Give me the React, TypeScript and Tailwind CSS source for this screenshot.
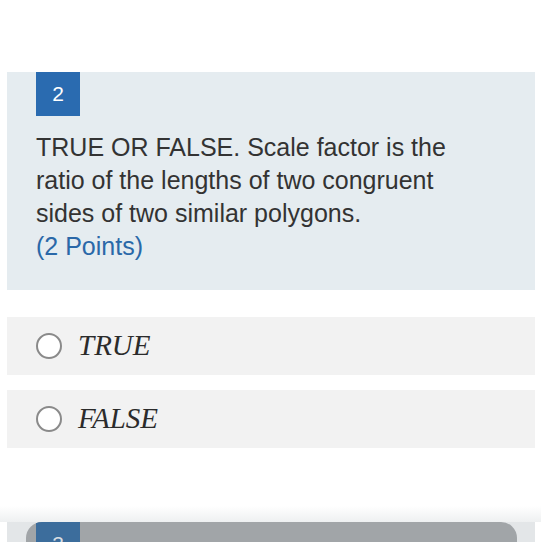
import React from 'react';

const sans = { fontFamily: '"Liberation Sans", Arial, Helvetica, sans-serif' };

function Option({ label }: { label: string }) {
  return (
    <div className="ml-[7px] mr-[6px] h-[58px] bg-[#f2f2f2] flex items-center pl-[29px]">
      <span className="w-[26px] h-[26px] rounded-full border-2 border-[#8a8a8a] bg-white flex-shrink-0" />
      <span className="ml-[16px] text-[29px] italic text-[#2b2b2b] font-['Liberation_Serif','Times_New_Roman',serif]">
        {label}
      </span>
    </div>
  );
}

export default function App() {
  return (
    <div className="w-[541px] h-[542px] bg-white overflow-hidden" style={sans}>
      <div className="h-[72px]" />

      {/* Question card */}
      <div className="ml-[7px] mr-[6px] bg-[#e5ecf0] pl-[29px] pb-[27px]">
        <div className="w-[44px] h-[44px] bg-[#2a6bb0] text-white text-[21px] flex items-center justify-center">
          2
        </div>
        <p className="mt-[15px] max-w-[440px] text-[25px] leading-[33px] text-[#333333]">
          TRUE OR FALSE. Scale factor is the ratio of the lengths of two congruent sides of two similar polygons.
          <br />
          <span className="text-[#2a68a8]">(2 Points)</span>
        </p>
      </div>

      {/* Choices */}
      <div className="mt-[27px] flex flex-col gap-[15px]">
        <Option label="TRUE" />
        <Option label="FALSE" />
      </div>

      {/* Next question, dimmed under an overlay */}
      <div className="mt-[58px] h-[16px] bg-gradient-to-b from-white to-[#eef0f1]" />
      <div className="ml-[7px] mr-[6px] h-[40px] bg-[#e3e6e8] flex">
        <div className="ml-[19px] w-[491px] bg-[#a1a5a8] rounded-t-[16px] overflow-hidden flex">
          <div className="ml-[10px] w-[44px] h-full bg-[#3c6d9c] text-[#d8dde2] text-[21px] flex justify-center pt-[6px]">
            3
          </div>
        </div>
      </div>
    </div>
  );
}
